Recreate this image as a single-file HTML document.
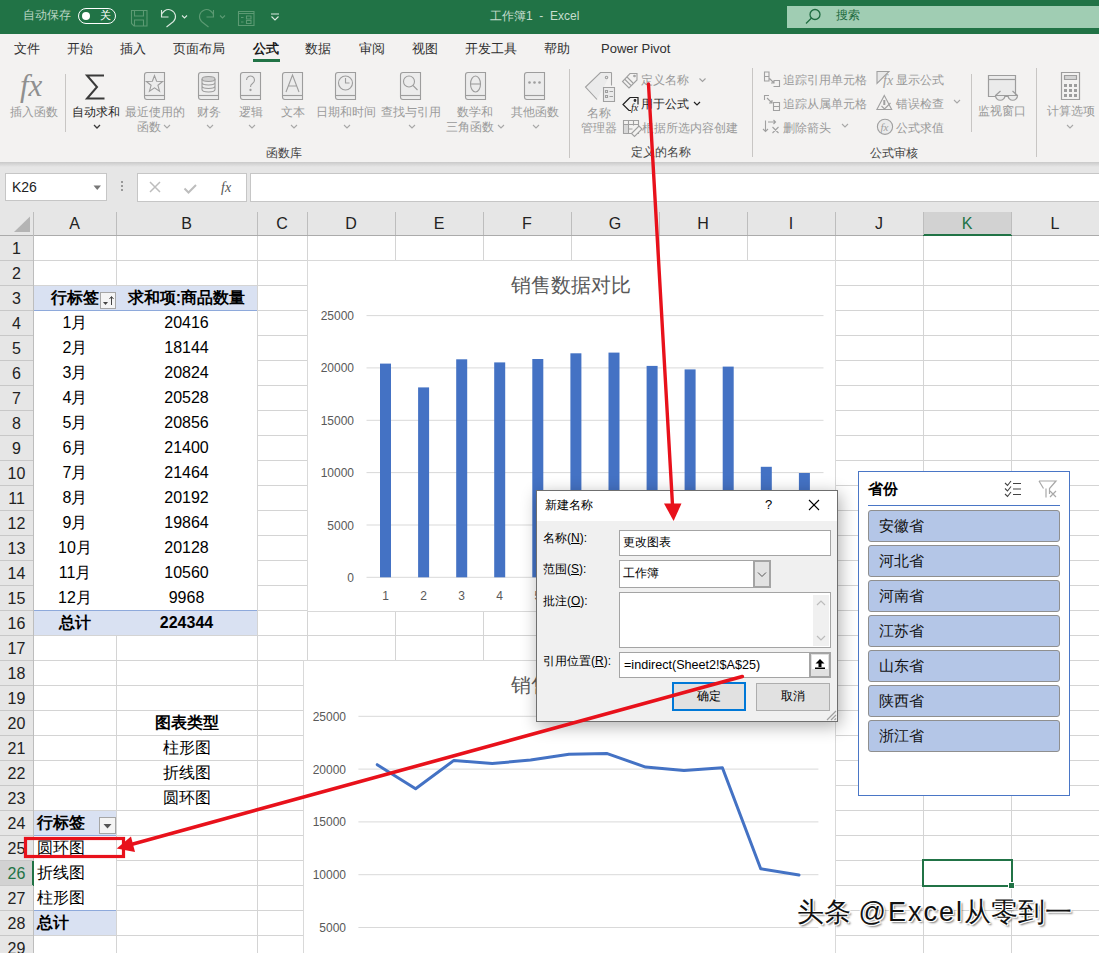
<!DOCTYPE html>
<html><head><meta charset="utf-8">
<style>
*{box-sizing:border-box}
body{margin:0;width:1099px;height:953px;overflow:hidden;position:relative;font-family:"Liberation Sans",sans-serif;background:#fff;color:#000}
.a{position:absolute}
.t{position:absolute;white-space:nowrap;line-height:1}
#title{left:0;top:0;width:1099px;height:34px;background:#217346}
#tabs{left:0;top:34px;width:1099px;height:31px;background:#f3f2f1}
#ribbon{left:0;top:65px;width:1099px;height:97px;background:#f3f2f1}
#fbar{left:0;top:162px;width:1099px;height:74px;background:#e6e6e6}
.tab{font-size:13px;color:#303030;top:42px}
.rl{font-size:12px;color:#9a9a9a}
.rd{font-size:12px;color:#262626}
.sep{position:absolute;width:1px;background:#c8c6c4}
.cell{position:absolute;font-size:16px;line-height:25px;height:25px;text-align:center;white-space:nowrap}
.c{font-size:15.8px}
.rh{position:absolute;left:0;width:33px;height:25px;font-size:16px;line-height:25px;text-align:center;color:#222}
.ch{position:absolute;top:212px;height:23px;font-size:16px;line-height:23px;text-align:center;color:#222}
</style></head><body>
<!-- TITLE BAR -->
<div id="title" class="a"></div>
<div class="t" style="left:23px;top:9px;font-size:12px;color:#b9d5c3">自动保存</div>
<div class="a" style="left:78px;top:8px;width:38px;height:16px;border:1.5px solid #fff;border-radius:8px"></div>
<div class="a" style="left:82px;top:12px;width:8px;height:8px;border-radius:50%;background:#fff"></div>
<div class="t" style="left:100px;top:10px;font-size:11px;color:#fff">关</div>
<svg class="a" style="left:0;top:0" width="300" height="34">
 <g fill="none" stroke="#5c9a73" stroke-width="1.1">
  <path d="M131.5 10.5h15.5v15.5h-13l-2.5-2.5z M134.5 10.5v5.5h9v-5.5 M134.5 26v-6h9v6"/>
  <path d="M161.5 16.5A7 7 0 1 1 173.5 21.5L166.5 27 M161.5 10v7h7" transform="translate(375,0) scale(-1,1)"/>
  <path d="M238.5 11.5h15.5v14h-15.5z M238.5 13.5h15.5 M241 17.5h2.5 M246.5 16h4.5v3h-4.5z M241 22h2.5 M246.5 20.5h4.5v3h-4.5z"/>
  <path d="M220 15.5l2.5 2.5 2.5-2.5"/>
 </g>
 <g fill="none" stroke="#dbe9e0" stroke-width="1.1">
  <path d="M161.5 16.5A7 7 0 1 1 173.5 21.5L166.5 27 M161.5 10v7h7"/>
  <path d="M182 15.5l2.5 2.5 2.5-2.5"/>
  <path d="M271 14h8 M271.5 16.5l3.5 3.5 3.5-3.5"/>
 </g>
</svg>
<div class="t" style="left:490px;top:10px;font-size:12px;color:#c5ddce">工作簿1&nbsp; - &nbsp;Excel</div>
<div class="a" style="left:787px;top:6px;width:312px;height:22px;background:#a0cdb3"></div>
<svg class="a" style="left:800px;top:6px" width="30" height="22"><g fill="none" stroke="#1e6b40" stroke-width="1.3"><circle cx="15" cy="8.5" r="5"/><path d="M11.5 12L6 17.5"/></g></svg>
<div class="t" style="left:836px;top:9px;font-size:12px;color:#1e6b40">搜索</div>

<!-- TABS -->
<div id="tabs" class="a"></div>
<div class="t tab" style="left:14px">文件</div>
<div class="t tab" style="left:67px">开始</div>
<div class="t tab" style="left:120px">插入</div>
<div class="t tab" style="left:173px">页面布局</div>
<div class="t tab" style="left:253px;color:#1a1a1a;font-weight:bold">公式</div>
<div class="a" style="left:253px;top:59px;width:27px;height:3px;background:#217346"></div>
<div class="t tab" style="left:305px">数据</div>
<div class="t tab" style="left:359px">审阅</div>
<div class="t tab" style="left:412px">视图</div>
<div class="t tab" style="left:465px">开发工具</div>
<div class="t tab" style="left:544px">帮助</div>
<div class="t tab" style="left:601px">Power Pivot</div>

<!-- RIBBON -->
<div id="ribbon" class="a"></div>
<!-- group 1 -->
<svg class="a" style="left:0;top:65px" width="1099" height="97">
 <text x="20" y="31" font-family="Liberation Serif" font-style="italic" font-size="31" fill="#8f8f8f">fx</text>
 <path d="M104 10.5H87l10 11.5-10 11.5h17.5" fill="none" stroke="#3a3a3a" stroke-width="2"/>
 <g fill="#f0efee" stroke="#9d9d9d" stroke-width="1.1"><path d="M147.0 7.5h17.5v27h-17.5a2.5 2.5 0 0 1 -2.5 -2.5v-22a2.5 2.5 0 0 1 2.5 -2.5z" fill="#ececec"/><path d="M144.5 30.5h20"/><path d="M146.5 31v3" stroke="#f3f2f1" stroke-width="0"/><path d="M201.0 7.5h17.5v27h-17.5a2.5 2.5 0 0 1 -2.5 -2.5v-22a2.5 2.5 0 0 1 2.5 -2.5z" fill="#ececec"/><path d="M198.5 30.5h20"/><path d="M200.5 31v3" stroke="#f3f2f1" stroke-width="0"/><path d="M243.0 7.5h17.5v27h-17.5a2.5 2.5 0 0 1 -2.5 -2.5v-22a2.5 2.5 0 0 1 2.5 -2.5z" fill="#ececec"/><path d="M240.5 30.5h20"/><path d="M242.5 31v3" stroke="#f3f2f1" stroke-width="0"/><path d="M285.0 7.5h17.5v27h-17.5a2.5 2.5 0 0 1 -2.5 -2.5v-22a2.5 2.5 0 0 1 2.5 -2.5z" fill="#ececec"/><path d="M282.5 30.5h20"/><path d="M284.5 31v3" stroke="#f3f2f1" stroke-width="0"/><path d="M338.0 7.5h17.5v27h-17.5a2.5 2.5 0 0 1 -2.5 -2.5v-22a2.5 2.5 0 0 1 2.5 -2.5z" fill="#ececec"/><path d="M335.5 30.5h20"/><path d="M337.5 31v3" stroke="#f3f2f1" stroke-width="0"/><path d="M403.0 7.5h17.5v27h-17.5a2.5 2.5 0 0 1 -2.5 -2.5v-22a2.5 2.5 0 0 1 2.5 -2.5z" fill="#ececec"/><path d="M400.5 30.5h20"/><path d="M402.5 31v3" stroke="#f3f2f1" stroke-width="0"/><path d="M468.0 7.5h17.5v27h-17.5a2.5 2.5 0 0 1 -2.5 -2.5v-22a2.5 2.5 0 0 1 2.5 -2.5z" fill="#ececec"/><path d="M465.5 30.5h20"/><path d="M467.5 31v3" stroke="#f3f2f1" stroke-width="0"/><path d="M527.0 7.5h17.5v27h-17.5a2.5 2.5 0 0 1 -2.5 -2.5v-22a2.5 2.5 0 0 1 2.5 -2.5z" fill="#ececec"/><path d="M524.5 30.5h20"/><path d="M526.5 31v3" stroke="#f3f2f1" stroke-width="0"/></g>
 <g fill="none" stroke="#9d9d9d" stroke-width="1.1">
  <path d="M154.50 10.60 L156.62 16.29 L162.68 16.54 L157.92 20.31 L159.55 26.16 L154.50 22.80 L149.45 26.16 L151.08 20.31 L146.32 16.54 L152.38 16.29z"/>
  <ellipse cx="208.5" cy="14" rx="6.5" ry="2.5" fill="#d0d0d0"/><path d="M202 14v10.5c0 1.4 2.9 2.5 6.5 2.5s6.5-1.1 6.5-2.5v-10.5 M202 17.5c0 1.4 2.9 2.5 6.5 2.5s6.5-1.1 6.5-2.5 M202 21c0 1.4 2.9 2.5 6.5 2.5s6.5-1.1 6.5-2.5"/>
  <path d="M246.5 15a4 4 0 1 1 6 3.5c-1.5 1-2 1.8-2 3.5" /><circle cx="250.5" cy="25" r="0.6" fill="#9d9d9d"/>
  <path d="M286 27l6.5-17 6.5 17 M288.5 21h8"/>
  <circle cx="345.5" cy="18" r="7"/><path d="M345.5 13v5h4"/>
  <circle cx="409" cy="16.5" r="5.5"/><path d="M413 20.5l4.5 4.5"/>
  <ellipse cx="475.5" cy="19" rx="5" ry="8"/><path d="M470.5 19h10"/>
 </g>
 <g fill="#9d9d9d"><circle cx="529.5" cy="17.5" r="1.3"/><circle cx="534.5" cy="17.5" r="1.3"/><circle cx="539.5" cy="17.5" r="1.3"/></g>
 <g fill="none" stroke="#3a3a3a" stroke-width="1.3"><path d="M94 60l3 3 3-3"/></g>
 <g fill="none" stroke="#a8a8a8" stroke-width="1.1">
  <path d="M164 60l3 3 3-3 M207 60l3 3 3-3 M249 60l3 3 3-3 M291 60l3 3 3-3 M344 60l3 3 3-3 M409 60l3 3 3-3 M498 60l3 3 3-3 M533 60l3 3 3-3"/>
 </g>
</svg>
<div class="sep" style="left:65px;top:74px;height:58px"></div>
<div class="t rl" style="left:10px;top:106px">插入函数</div>
<div class="t rd" style="left:72px;top:106px">自动求和</div>
<div class="t rl" style="left:125px;top:106px">最近使用的</div>
<div class="t rl" style="left:137px;top:121px">函数</div>
<div class="t rl" style="left:197px;top:106px">财务</div>
<div class="t rl" style="left:239px;top:106px">逻辑</div>
<div class="t rl" style="left:281px;top:106px">文本</div>
<div class="t rl" style="left:316px;top:106px">日期和时间</div>
<div class="t rl" style="left:381px;top:106px">查找与引用</div>
<div class="t rl" style="left:457px;top:106px">数学和</div>
<div class="t rl" style="left:446px;top:121px">三角函数</div>
<div class="t rl" style="left:511px;top:106px">其他函数</div>
<div class="t rd" style="left:266px;top:147px;color:#444">函数库</div>
<div class="sep" style="left:569px;top:69px;height:89px"></div>
<!-- group 2 -->
<svg class="a" style="left:560px;top:65px" width="540" height="97">
 <g fill="none" stroke="#a0a0a0" stroke-width="1.1">
  <path d="M51.5 7.5h-11L25.5 22l11.5 12.5" fill="#ebebeb"/><path d="M51.5 7.5v13"/><circle cx="46.5" cy="12.5" r="1.2"/>
  <path d="M43.5 22.5h11v14h-11z" fill="#ebebeb"/><path d="M45.5 25.5h2v2h-2z M49.5 26.5h3.5 M45.5 30.5h2v2h-2z M49.5 31.5h3.5"/>
  <path d="M70 8.5h7v6.5l-8 8-6.5-6.5z M67 12l6 6 M65 14.5l6 6"/><circle cx="74.5" cy="11" r="0.8"/>
  <path d="M699.5 13.5l3 3 3-3" transform="translate(-560,0)"/>
  <path d="M63.5 55.5h15v13h-15z M63.5 59.5h15 M63.5 64h9 M68.5 55.5v13 M73.5 55.5v5" /><path d="M64 60h4v8h-4z" fill="#d8d8d8" stroke="none"/><path d="M71.5 68.5l7.5-7.5 3 3-7.5 7.5-3-3z" fill="#f3f2f1"/>
 </g>
 <g fill="none" stroke="#222" stroke-width="1.2">
  <path d="M70 32.5h8v7 M70 32.5l-7 7 6 6h2"/><circle cx="75" cy="35.5" r="0.8"/>
  <path d="M134 37l3 3 3-3"/>
 </g>
 <text x="71" y="46" font-family="Liberation Serif" font-style="italic" font-size="10" fill="#222">fx</text>
</svg>
<div class="t rl" style="left:587px;top:107px">名称</div>
<div class="t rl" style="left:581px;top:122px">管理器</div>
<div class="t rl" style="left:641px;top:74px">定义名称</div>
<div class="t rd" style="left:641px;top:98px">用于公式</div>
<div class="t rl" style="left:642px;top:122px">根据所选内容创建</div>
<div class="t rd" style="left:631px;top:146px;color:#444">定义的名称</div>
<div class="sep" style="left:752px;top:68px;height:89px"></div>
<!-- group 3 -->
<svg class="a" style="left:750px;top:65px" width="349" height="97">
 <g fill="none" stroke="#a0a0a0" stroke-width="1.1">
  <path d="M14.5 7h4.5v9h-4.5z M14.5 11.5h4.5 M19.5 13.5l4.5 4.5 M24 15v3h-3 M23.5 15.5h6v6h-6"/>
  <path d="M14.5 35v-4.5h4.5 M17 33l5 5 M22 35v3h-3 M23.5 37.5h6v8h-6z M23.5 41.5h6"/>
  <path d="M15.5 55.5v11 M13 64l2.5 2.5 2.5-2.5 M18 57h7.5 M23.5 55l2 2-2 2 M22.5 62l6 6 M28.5 62l-6 6"/>
  <path d="M127 6.5h12L127 18.5z" fill="#e8e8e8"/>
  <path d="M134.3 30.5l7.4 14h-14.8z"/><path d="M134.3 35v5" stroke-width="2"/><path d="M131.5 41l3 3 6-6"/>
  <circle cx="135" cy="61.8" r="7.6" fill="#ececec"/>
 </g>
 <text x="133" y="20" font-family="Liberation Serif" font-style="italic" font-size="14" fill="#a0a0a0">fx</text>
 <text x="130.5" y="66" font-family="Liberation Serif" font-style="italic" font-size="11" fill="#a0a0a0">fx</text>
 <g fill="none" stroke="#a8a8a8" stroke-width="1.1"><path d="M92 59l3 3 3-3 M204 35l3 3 3-3"/></g>
 <g fill="none" stroke="#9d9d9d" stroke-width="1.2">
  <path d="M238.5 10.5h27v21h-27z" fill="#ebebeb"/><path d="M238.5 14.5h27"/>
  <path d="M245.5 30.5h9.5a4.75 4.75 0 0 1 -9.5 0z M258 30.5h9.5a4.75 4.75 0 0 1 -9.5 0z" fill="#ebebeb"/><path d="M255 30.5h3 M245.5 30.5l5-4.5 M267.5 30.5l-5-4.5"/>
  <path d="M311.5 7.5h18v27h-18z"/><path d="M314.5 10.5h12v4h-12z" fill="#d4d4d4"/>
 </g>
 <g fill="#9d9d9d">
  <rect x="314" y="19" width="3" height="3"/><rect x="319" y="19" width="3" height="3"/><rect x="324" y="19" width="3" height="3"/>
  <rect x="314" y="24" width="3" height="3"/><rect x="319" y="24" width="3" height="3"/><rect x="324" y="24" width="3" height="3"/>
  <rect x="314" y="29" width="3" height="3"/><rect x="319" y="29" width="3" height="3"/><rect x="324" y="29" width="3" height="3"/>
 </g>
 <g fill="none" stroke="#a8a8a8" stroke-width="1.1"><path d="M317 60l3 3 3-3"/></g>
</svg>
<div class="t rl" style="left:783px;top:74px">追踪引用单元格</div>
<div class="t rl" style="left:783px;top:98px">追踪从属单元格</div>
<div class="t rl" style="left:783px;top:122px">删除箭头</div>
<div class="t rl" style="left:896px;top:74px">显示公式</div>
<div class="t rl" style="left:896px;top:98px">错误检查</div>
<div class="t rl" style="left:896px;top:122px">公式求值</div>
<div class="t rd" style="left:870px;top:147px;color:#444">公式审核</div>
<div class="sep" style="left:971px;top:74px;height:58px"></div>
<div class="t rl" style="left:978px;top:105px">监视窗口</div>
<div class="sep" style="left:1036px;top:68px;height:89px"></div>
<div class="t rl" style="left:1047px;top:105px">计算选项</div>


<!-- FORMULA BAR -->
<div id="fbar" class="a"></div>
<div class="a" style="left:0;top:162px;width:1099px;height:5px;background:linear-gradient(#c9c9c9,#e6e6e6)"></div>
<div class="a" style="left:5px;top:173px;width:102px;height:28px;background:#fff;border:1px solid #c6c6c6"></div>
<div class="t" style="left:12px;top:180px;font-size:14px;color:#222">K26</div>
<svg class="a" style="left:93px;top:185px" width="9" height="6"><path d="M0.5 0.5h7.5l-3.75 4.5z" fill="#777"/></svg>
<div class="a" style="left:121px;top:181px;width:2px;height:2px;background:#999;box-shadow:0 4px #999,0 8px #999"></div>
<div class="a" style="left:137px;top:173px;width:110px;height:29px;background:#fff;border:1px solid #c6c6c6"></div>
<svg class="a" style="left:137px;top:173px" width="110" height="29"><g fill="none" stroke="#bdbdbd" stroke-width="1.5"><path d="M13 9l10 10M23 9l-10 10"/><path d="M47.5 15.5l4 4 7.5-7.5" stroke-width="2"/></g>
<text x="84" y="19" font-family="Liberation Serif" font-style="italic" font-size="14" fill="#555">fx</text></svg>
<div class="a" style="left:250px;top:173px;width:849px;height:29px;background:#fff;border:1px solid #c6c6c6;border-right:none"></div>

<!-- SHEET -->
<div class="a" style="left:0;top:236px;width:33px;height:717px;background:#e6e6e6"></div><svg class="a" style="left:0;top:0" width="1099" height="953"><rect x="116" y="235" width="1" height="718" fill="#d4d4d4"/><rect x="257" y="235" width="1" height="718" fill="#d4d4d4"/><rect x="307" y="235" width="1" height="718" fill="#d4d4d4"/><rect x="395" y="235" width="1" height="718" fill="#d4d4d4"/><rect x="483" y="235" width="1" height="718" fill="#d4d4d4"/><rect x="571" y="235" width="1" height="718" fill="#d4d4d4"/><rect x="659" y="235" width="1" height="718" fill="#d4d4d4"/><rect x="747" y="235" width="1" height="718" fill="#d4d4d4"/><rect x="835" y="235" width="1" height="718" fill="#d4d4d4"/><rect x="923" y="235" width="1" height="718" fill="#d4d4d4"/><rect x="1011" y="235" width="1" height="718" fill="#d4d4d4"/><rect x="33" y="260" width="1066" height="1" fill="#d4d4d4"/><rect x="33" y="285" width="1066" height="1" fill="#d4d4d4"/><rect x="33" y="310" width="1066" height="1" fill="#d4d4d4"/><rect x="33" y="335" width="1066" height="1" fill="#d4d4d4"/><rect x="33" y="360" width="1066" height="1" fill="#d4d4d4"/><rect x="33" y="385" width="1066" height="1" fill="#d4d4d4"/><rect x="33" y="410" width="1066" height="1" fill="#d4d4d4"/><rect x="33" y="435" width="1066" height="1" fill="#d4d4d4"/><rect x="33" y="460" width="1066" height="1" fill="#d4d4d4"/><rect x="33" y="485" width="1066" height="1" fill="#d4d4d4"/><rect x="33" y="510" width="1066" height="1" fill="#d4d4d4"/><rect x="33" y="535" width="1066" height="1" fill="#d4d4d4"/><rect x="33" y="560" width="1066" height="1" fill="#d4d4d4"/><rect x="33" y="585" width="1066" height="1" fill="#d4d4d4"/><rect x="33" y="610" width="1066" height="1" fill="#d4d4d4"/><rect x="33" y="635" width="1066" height="1" fill="#d4d4d4"/><rect x="33" y="660" width="1066" height="1" fill="#d4d4d4"/><rect x="33" y="685" width="1066" height="1" fill="#d4d4d4"/><rect x="33" y="710" width="1066" height="1" fill="#d4d4d4"/><rect x="33" y="735" width="1066" height="1" fill="#d4d4d4"/><rect x="33" y="760" width="1066" height="1" fill="#d4d4d4"/><rect x="33" y="785" width="1066" height="1" fill="#d4d4d4"/><rect x="33" y="810" width="1066" height="1" fill="#d4d4d4"/><rect x="33" y="835" width="1066" height="1" fill="#d4d4d4"/><rect x="33" y="860" width="1066" height="1" fill="#d4d4d4"/><rect x="33" y="885" width="1066" height="1" fill="#d4d4d4"/><rect x="33" y="910" width="1066" height="1" fill="#d4d4d4"/><rect x="33" y="935" width="1066" height="1" fill="#d4d4d4"/></svg>
<div class="a" style="left:0;top:235px;width:1099px;height:1px;background:#ababab"></div>
<div class="a" style="left:923px;top:212px;width:88px;height:23px;background:#d2d2d2"></div>
<div class="a" style="left:923px;top:234px;width:89px;height:2px;background:#217346"></div>
<div class="a" style="left:116px;top:212px;width:1px;height:23px;background:#bdbdbd"></div>
<div class="ch" style="left:33px;width:83px;color:#222">A</div>
<div class="a" style="left:257px;top:212px;width:1px;height:23px;background:#bdbdbd"></div>
<div class="ch" style="left:116px;width:141px;color:#222">B</div>
<div class="a" style="left:307px;top:212px;width:1px;height:23px;background:#bdbdbd"></div>
<div class="ch" style="left:257px;width:50px;color:#222">C</div>
<div class="a" style="left:395px;top:212px;width:1px;height:23px;background:#bdbdbd"></div>
<div class="ch" style="left:307px;width:88px;color:#222">D</div>
<div class="a" style="left:483px;top:212px;width:1px;height:23px;background:#bdbdbd"></div>
<div class="ch" style="left:395px;width:88px;color:#222">E</div>
<div class="a" style="left:571px;top:212px;width:1px;height:23px;background:#bdbdbd"></div>
<div class="ch" style="left:483px;width:88px;color:#222">F</div>
<div class="a" style="left:659px;top:212px;width:1px;height:23px;background:#bdbdbd"></div>
<div class="ch" style="left:571px;width:88px;color:#222">G</div>
<div class="a" style="left:747px;top:212px;width:1px;height:23px;background:#bdbdbd"></div>
<div class="ch" style="left:659px;width:88px;color:#222">H</div>
<div class="a" style="left:835px;top:212px;width:1px;height:23px;background:#bdbdbd"></div>
<div class="ch" style="left:747px;width:88px;color:#222">I</div>
<div class="a" style="left:923px;top:212px;width:1px;height:23px;background:#bdbdbd"></div>
<div class="ch" style="left:835px;width:88px;color:#222">J</div>
<div class="a" style="left:1011px;top:212px;width:1px;height:23px;background:#bdbdbd"></div>
<div class="ch" style="left:923px;width:88px;color:#217346">K</div>
<div class="a" style="left:1099px;top:212px;width:1px;height:23px;background:#bdbdbd"></div>
<div class="ch" style="left:1011px;width:88px;color:#222">L</div>
<div class="a" style="left:33px;top:212px;width:1px;height:741px;background:#bdbdbd"></div>
<svg class="a" style="left:0;top:212px" width="33" height="23"><path d="M30 4.5V20H14z" fill="#b4b4b4"/></svg>
<div class="a" style="left:0;top:260px;width:33px;height:1px;background:#c8c8c8"></div>
<div class="rh" style="top:236px;color:#222">1</div>
<div class="a" style="left:0;top:285px;width:33px;height:1px;background:#c8c8c8"></div>
<div class="rh" style="top:261px;color:#222">2</div>
<div class="a" style="left:0;top:310px;width:33px;height:1px;background:#c8c8c8"></div>
<div class="rh" style="top:286px;color:#222">3</div>
<div class="a" style="left:0;top:335px;width:33px;height:1px;background:#c8c8c8"></div>
<div class="rh" style="top:311px;color:#222">4</div>
<div class="a" style="left:0;top:360px;width:33px;height:1px;background:#c8c8c8"></div>
<div class="rh" style="top:336px;color:#222">5</div>
<div class="a" style="left:0;top:385px;width:33px;height:1px;background:#c8c8c8"></div>
<div class="rh" style="top:361px;color:#222">6</div>
<div class="a" style="left:0;top:410px;width:33px;height:1px;background:#c8c8c8"></div>
<div class="rh" style="top:386px;color:#222">7</div>
<div class="a" style="left:0;top:435px;width:33px;height:1px;background:#c8c8c8"></div>
<div class="rh" style="top:411px;color:#222">8</div>
<div class="a" style="left:0;top:460px;width:33px;height:1px;background:#c8c8c8"></div>
<div class="rh" style="top:436px;color:#222">9</div>
<div class="a" style="left:0;top:485px;width:33px;height:1px;background:#c8c8c8"></div>
<div class="rh" style="top:461px;color:#222">10</div>
<div class="a" style="left:0;top:510px;width:33px;height:1px;background:#c8c8c8"></div>
<div class="rh" style="top:486px;color:#222">11</div>
<div class="a" style="left:0;top:535px;width:33px;height:1px;background:#c8c8c8"></div>
<div class="rh" style="top:511px;color:#222">12</div>
<div class="a" style="left:0;top:560px;width:33px;height:1px;background:#c8c8c8"></div>
<div class="rh" style="top:536px;color:#222">13</div>
<div class="a" style="left:0;top:585px;width:33px;height:1px;background:#c8c8c8"></div>
<div class="rh" style="top:561px;color:#222">14</div>
<div class="a" style="left:0;top:610px;width:33px;height:1px;background:#c8c8c8"></div>
<div class="rh" style="top:586px;color:#222">15</div>
<div class="a" style="left:0;top:635px;width:33px;height:1px;background:#c8c8c8"></div>
<div class="rh" style="top:611px;color:#222">16</div>
<div class="a" style="left:0;top:660px;width:33px;height:1px;background:#c8c8c8"></div>
<div class="rh" style="top:636px;color:#222">17</div>
<div class="a" style="left:0;top:685px;width:33px;height:1px;background:#c8c8c8"></div>
<div class="rh" style="top:661px;color:#222">18</div>
<div class="a" style="left:0;top:710px;width:33px;height:1px;background:#c8c8c8"></div>
<div class="rh" style="top:686px;color:#222">19</div>
<div class="a" style="left:0;top:735px;width:33px;height:1px;background:#c8c8c8"></div>
<div class="rh" style="top:711px;color:#222">20</div>
<div class="a" style="left:0;top:760px;width:33px;height:1px;background:#c8c8c8"></div>
<div class="rh" style="top:736px;color:#222">21</div>
<div class="a" style="left:0;top:785px;width:33px;height:1px;background:#c8c8c8"></div>
<div class="rh" style="top:761px;color:#222">22</div>
<div class="a" style="left:0;top:810px;width:33px;height:1px;background:#c8c8c8"></div>
<div class="rh" style="top:786px;color:#222">23</div>
<div class="a" style="left:0;top:835px;width:33px;height:1px;background:#c8c8c8"></div>
<div class="rh" style="top:811px;color:#222">24</div>
<div class="a" style="left:0;top:860px;width:33px;height:1px;background:#c8c8c8"></div>
<div class="rh" style="top:836px;color:#222">25</div>
<div class="a" style="left:0;top:861px;width:33px;height:24px;background:#d2d2d2"></div>
<div class="a" style="left:32px;top:861px;width:2px;height:25px;background:#217346"></div>
<div class="a" style="left:0;top:885px;width:33px;height:1px;background:#c8c8c8"></div>
<div class="rh" style="top:861px;color:#217346">26</div>
<div class="a" style="left:0;top:910px;width:33px;height:1px;background:#c8c8c8"></div>
<div class="rh" style="top:886px;color:#222">27</div>
<div class="a" style="left:0;top:935px;width:33px;height:1px;background:#c8c8c8"></div>
<div class="rh" style="top:911px;color:#222">28</div>
<div class="a" style="left:0;top:960px;width:33px;height:1px;background:#c8c8c8"></div>
<div class="rh" style="top:936px;color:#222">29</div>
<!-- PIVOT 1 -->
<div class="a" style="left:34px;top:286px;width:223px;height:349px;background:#fff"></div>
<div class="a" style="left:34px;top:286px;width:223px;height:24px;background:#d9e1f2"></div>
<div class="a" style="left:34px;top:310px;width:223px;height:1px;background:#8ea9db"></div>
<div class="a" style="left:34px;top:610px;width:223px;height:1px;background:#8ea9db"></div>
<div class="a" style="left:34px;top:611px;width:223px;height:24px;background:#d9e1f2"></div>
<div class="cell" style="left:51px;top:285px;font-weight:bold"><span class="c">行标签</span></div>
<div class="a" style="left:100px;top:292px;width:16px;height:17px;border:1px solid #a6a6a6;background:#f4f4f4"></div>
<svg class="a" style="left:100px;top:292px" width="16" height="17"><path d="M3 10h5l-2.5 3z" fill="#444"/><path d="M11.5 13V5 M9.5 7l2-2.5 2 2.5" fill="none" stroke="#444" stroke-width="1"/></svg>
<div class="cell" style="left:116px;top:285px;width:141px;font-weight:bold"><span class="c">求和项:商品数量</span></div>
<div class="cell" style="left:34px;top:310px;width:82px">1<span class="c">月</span></div><div class="cell" style="left:116px;top:310px;width:141px">20416</div>
<div class="cell" style="left:34px;top:335px;width:82px">2<span class="c">月</span></div><div class="cell" style="left:116px;top:335px;width:141px">18144</div>
<div class="cell" style="left:34px;top:360px;width:82px">3<span class="c">月</span></div><div class="cell" style="left:116px;top:360px;width:141px">20824</div>
<div class="cell" style="left:34px;top:385px;width:82px">4<span class="c">月</span></div><div class="cell" style="left:116px;top:385px;width:141px">20528</div>
<div class="cell" style="left:34px;top:410px;width:82px">5<span class="c">月</span></div><div class="cell" style="left:116px;top:410px;width:141px">20856</div>
<div class="cell" style="left:34px;top:435px;width:82px">6<span class="c">月</span></div><div class="cell" style="left:116px;top:435px;width:141px">21400</div>
<div class="cell" style="left:34px;top:460px;width:82px">7<span class="c">月</span></div><div class="cell" style="left:116px;top:460px;width:141px">21464</div>
<div class="cell" style="left:34px;top:485px;width:82px">8<span class="c">月</span></div><div class="cell" style="left:116px;top:485px;width:141px">20192</div>
<div class="cell" style="left:34px;top:510px;width:82px">9<span class="c">月</span></div><div class="cell" style="left:116px;top:510px;width:141px">19864</div>
<div class="cell" style="left:34px;top:535px;width:82px">10<span class="c">月</span></div><div class="cell" style="left:116px;top:535px;width:141px">20128</div>
<div class="cell" style="left:34px;top:560px;width:82px">11<span class="c">月</span></div><div class="cell" style="left:116px;top:560px;width:141px">10560</div>
<div class="cell" style="left:34px;top:585px;width:82px">12<span class="c">月</span></div><div class="cell" style="left:116px;top:585px;width:141px">9968</div>
<div class="cell" style="left:34px;top:610px;width:82px;font-weight:bold"><span class="c">总计</span></div><div class="cell" style="left:116px;top:610px;width:141px;font-weight:bold">224344</div>
<!-- chart type list -->
<div class="cell" style="left:116px;top:710px;width:141px;font-weight:bold"><span class="c">图表类型</span></div>
<div class="cell" style="left:116px;top:735px;width:141px"><span class="c">柱形图</span></div>
<div class="cell" style="left:116px;top:760px;width:141px"><span class="c">折线图</span></div>
<div class="cell" style="left:116px;top:785px;width:141px"><span class="c">圆环图</span></div>
<!-- PIVOT 2 -->
<div class="a" style="left:34px;top:811px;width:82px;height:124px;background:#fff"></div>
<div class="a" style="left:34px;top:811px;width:82px;height:24px;background:#d9e1f2"></div>
<div class="a" style="left:34px;top:835px;width:82px;height:1px;background:#8ea9db"></div>
<div class="a" style="left:34px;top:910px;width:82px;height:1px;background:#8ea9db"></div>
<div class="a" style="left:34px;top:911px;width:82px;height:24px;background:#d9e1f2"></div>
<div class="cell" style="left:37px;top:810px;font-weight:bold"><span class="c">行标签</span></div>
<div class="a" style="left:99px;top:817px;width:17px;height:17px;border:1px solid #a6a6a6;background:#f4f4f4"></div>
<svg class="a" style="left:99px;top:817px" width="17" height="17"><path d="M4.5 7h8l-4 4.5z" fill="#555"/></svg>
<div class="cell" style="left:37px;top:835px"><span class="c">圆环图</span></div>
<div class="cell" style="left:37px;top:860px"><span class="c">折线图</span></div>
<div class="cell" style="left:37px;top:885px"><span class="c">柱形图</span></div>
<div class="cell" style="left:37px;top:910px;font-weight:bold"><span class="c">总计</span></div>
<div class="a" style="left:307px;top:260px;width:529px;height:352px;background:#fff;border:1px solid #d9d9d9"></div>
<svg class="a" style="left:0;top:0" width="1099" height="953"><text x="571" y="292" text-anchor="middle" font-family="Liberation Sans" font-size="20" fill="#595959">销售数据对比</text><rect x="366.5" y="576.8" width="457" height="1" fill="#d9d9d9"/><text x="354" y="581.8" text-anchor="end" font-family="Liberation Sans" font-size="12" fill="#595959">0</text><rect x="366.5" y="524.5" width="457" height="1" fill="#d9d9d9"/><text x="354" y="529.5" text-anchor="end" font-family="Liberation Sans" font-size="12" fill="#595959">5000</text><rect x="366.5" y="472.1" width="457" height="1" fill="#d9d9d9"/><text x="354" y="477.1" text-anchor="end" font-family="Liberation Sans" font-size="12" fill="#595959">10000</text><rect x="366.5" y="419.8" width="457" height="1" fill="#d9d9d9"/><text x="354" y="424.8" text-anchor="end" font-family="Liberation Sans" font-size="12" fill="#595959">15000</text><rect x="366.5" y="367.4" width="457" height="1" fill="#d9d9d9"/><text x="354" y="372.4" text-anchor="end" font-family="Liberation Sans" font-size="12" fill="#595959">20000</text><rect x="366.5" y="315.1" width="457" height="1" fill="#d9d9d9"/><text x="354" y="320.1" text-anchor="end" font-family="Liberation Sans" font-size="12" fill="#595959">25000</text><rect x="380.0" y="363.6" width="11" height="213.7" fill="#4472c4"/><text x="385.5" y="600" text-anchor="middle" font-family="Liberation Sans" font-size="12" fill="#595959">1</text><rect x="418.1" y="387.4" width="11" height="189.9" fill="#4472c4"/><text x="423.6" y="600" text-anchor="middle" font-family="Liberation Sans" font-size="12" fill="#595959">2</text><rect x="456.2" y="359.3" width="11" height="218.0" fill="#4472c4"/><text x="461.7" y="600" text-anchor="middle" font-family="Liberation Sans" font-size="12" fill="#595959">3</text><rect x="494.2" y="362.4" width="11" height="214.9" fill="#4472c4"/><text x="499.7" y="600" text-anchor="middle" font-family="Liberation Sans" font-size="12" fill="#595959">4</text><rect x="532.3" y="359.0" width="11" height="218.3" fill="#4472c4"/><text x="537.8" y="600" text-anchor="middle" font-family="Liberation Sans" font-size="12" fill="#595959">5</text><rect x="570.4" y="353.3" width="11" height="224.0" fill="#4472c4"/><text x="575.9" y="600" text-anchor="middle" font-family="Liberation Sans" font-size="12" fill="#595959">6</text><rect x="608.5" y="352.6" width="11" height="224.7" fill="#4472c4"/><text x="614.0" y="600" text-anchor="middle" font-family="Liberation Sans" font-size="12" fill="#595959">7</text><rect x="646.6" y="365.9" width="11" height="211.4" fill="#4472c4"/><text x="652.1" y="600" text-anchor="middle" font-family="Liberation Sans" font-size="12" fill="#595959">8</text><rect x="684.6" y="369.4" width="11" height="207.9" fill="#4472c4"/><text x="690.1" y="600" text-anchor="middle" font-family="Liberation Sans" font-size="12" fill="#595959">9</text><rect x="722.7" y="366.6" width="11" height="210.7" fill="#4472c4"/><text x="728.2" y="600" text-anchor="middle" font-family="Liberation Sans" font-size="12" fill="#595959">10</text><rect x="760.8" y="466.8" width="11" height="110.5" fill="#4472c4"/><text x="766.3" y="600" text-anchor="middle" font-family="Liberation Sans" font-size="12" fill="#595959">11</text><rect x="798.9" y="473.0" width="11" height="104.3" fill="#4472c4"/><text x="804.4" y="600" text-anchor="middle" font-family="Liberation Sans" font-size="12" fill="#595959">12</text></svg>
<div class="a" style="left:303px;top:660px;width:533px;height:300px;background:#fff;border:1px solid #d9d9d9"></div>
<svg class="a" style="left:0;top:0" width="1099" height="953"><text x="571" y="692" text-anchor="middle" font-family="Liberation Sans" font-size="20" fill="#595959">销售数据对比</text><rect x="358.4" y="715.8" width="460" height="1" fill="#d9d9d9"/><text x="346" y="720.8" text-anchor="end" font-family="Liberation Sans" font-size="12" fill="#595959">25000</text><rect x="358.4" y="768.6" width="460" height="1" fill="#d9d9d9"/><text x="346" y="773.6" text-anchor="end" font-family="Liberation Sans" font-size="12" fill="#595959">20000</text><rect x="358.4" y="821.4" width="460" height="1" fill="#d9d9d9"/><text x="346" y="826.4" text-anchor="end" font-family="Liberation Sans" font-size="12" fill="#595959">15000</text><rect x="358.4" y="874.2" width="460" height="1" fill="#d9d9d9"/><text x="346" y="879.2" text-anchor="end" font-family="Liberation Sans" font-size="12" fill="#595959">10000</text><rect x="358.4" y="927.0" width="460" height="1" fill="#d9d9d9"/><text x="346" y="932.0" text-anchor="end" font-family="Liberation Sans" font-size="12" fill="#595959">5000</text><polyline points="377.2,764.7 415.6,788.7 453.9,760.4 492.2,763.5 530.6,760.1 569.0,754.3 607.3,753.6 645.6,767.1 684.0,770.5 722.4,767.7 760.7,868.8 799.0,875.0" fill="none" stroke="#4472c4" stroke-width="3" stroke-linejoin="round" stroke-linecap="round"/></svg>
<!-- SELECTION K26 -->
<div class="a" style="left:922px;top:859px;width:91px;height:28px;border:2px solid #217346"></div>
<div class="a" style="left:1008px;top:882px;width:7px;height:7px;background:#217346;border:1px solid #fff"></div>
<!-- SLICER -->
<div class="a" style="left:858px;top:471px;width:212px;height:325px;background:#fff;border:1px solid #4a76c6"></div>
<div class="t" style="left:868px;top:481px;font-size:15px;font-weight:bold;color:#000">省份</div>
<svg class="a" style="left:1000px;top:476px" width="65" height="28">
 <g fill="none" stroke="#444" stroke-width="1.1"><path d="M5 7l2.5 2.5 3.5-4.5 M5 12.5l2.5 2.5 3.5-4.5 M5 18l2.5 2.5 3.5-4.5 M13 7.5h8 M13 13h8 M13 18.5h8"/></g>
 <g fill="none" stroke="#a8a8a8" stroke-width="1.2"><path d="M39 5h17l-6.5 7.5v5.5 M56.5 5 M43.5 12.5L39 5"/><path d="M46 12.5v9 M50 15l6 6 M56 15l-6 6"/></g>
</svg>
<div class="a" style="left:868px;top:505px;width:192px;height:1px;background:#4a76c6"></div>
<div class="a" style="left:868px;top:510px;width:192px;height:32px;background:#b4c6e7;border:1px solid #8f8f8f;border-radius:3px"></div>
<div class="t" style="left:879px;top:518px;font-size:15px;color:#111">安徽省</div>
<div class="a" style="left:868px;top:545px;width:192px;height:32px;background:#b4c6e7;border:1px solid #8f8f8f;border-radius:3px"></div>
<div class="t" style="left:879px;top:553px;font-size:15px;color:#111">河北省</div>
<div class="a" style="left:868px;top:580px;width:192px;height:32px;background:#b4c6e7;border:1px solid #8f8f8f;border-radius:3px"></div>
<div class="t" style="left:879px;top:588px;font-size:15px;color:#111">河南省</div>
<div class="a" style="left:868px;top:615px;width:192px;height:32px;background:#b4c6e7;border:1px solid #8f8f8f;border-radius:3px"></div>
<div class="t" style="left:879px;top:623px;font-size:15px;color:#111">江苏省</div>
<div class="a" style="left:868px;top:650px;width:192px;height:32px;background:#b4c6e7;border:1px solid #8f8f8f;border-radius:3px"></div>
<div class="t" style="left:879px;top:658px;font-size:15px;color:#111">山东省</div>
<div class="a" style="left:868px;top:685px;width:192px;height:32px;background:#b4c6e7;border:1px solid #8f8f8f;border-radius:3px"></div>
<div class="t" style="left:879px;top:693px;font-size:15px;color:#111">陕西省</div>
<div class="a" style="left:868px;top:720px;width:192px;height:32px;background:#b4c6e7;border:1px solid #8f8f8f;border-radius:3px"></div>
<div class="t" style="left:879px;top:728px;font-size:15px;color:#111">浙江省</div>
<!-- DIALOG -->
<div class="a" style="left:536px;top:490px;width:302px;height:232px;background:#f0f0f0;border:1px solid #6f6f6f;box-shadow:2px 4px 16px rgba(0,0,0,0.32)"></div>
<div class="a" style="left:537px;top:491px;width:300px;height:30px;background:#fff"></div>
<div class="t" style="left:545px;top:499px;font-size:12px">新建名称</div>
<div class="t" style="left:765px;top:498px;font-size:13px">?</div>
<svg class="a" style="left:808px;top:499px" width="12" height="12"><path d="M1 1l10 10M11 1L1 11" stroke="#000" stroke-width="1.1"/></svg>
<div class="t" style="left:543px;top:532px;font-size:12px">名称(<u>N</u>):</div>
<div class="t" style="left:543px;top:563px;font-size:12px">范围(<u>S</u>):</div>
<div class="t" style="left:543px;top:595px;font-size:12px">批注(<u>O</u>):</div>
<div class="t" style="left:543px;top:655px;font-size:12px">引用位置(<u>R</u>):</div>
<div class="a" style="left:619px;top:530px;width:212px;height:26px;background:#fff;border:1px solid #a4a4a4"></div>
<div class="t" style="left:623px;top:536px;font-size:12px">更改图表</div>
<div class="a" style="left:619px;top:560px;width:152px;height:28px;background:#fff;border:1px solid #a4a4a4"></div>
<div class="a" style="left:753px;top:560px;width:18px;height:28px;background:#e2e2e2;border:2px solid #a4a4a4"></div>
<svg class="a" style="left:753px;top:560px" width="18" height="28"><path d="M5 12.5l4 4 4-4" fill="none" stroke="#555" stroke-width="1"/></svg>
<div class="t" style="left:623px;top:567px;font-size:12px">工作簿</div>
<div class="a" style="left:619px;top:592px;width:212px;height:56px;background:#fff;border:1px solid #a4a4a4"></div>
<div class="a" style="left:813px;top:595px;width:16px;height:51px;background:#f0f0f0"></div>
<svg class="a" style="left:813px;top:595px" width="16" height="51"><path d="M4 10l4-4 4 4 M4 41l4 4 4-4" fill="none" stroke="#bcbcbc" stroke-width="1.2"/></svg>
<div class="a" style="left:619px;top:652px;width:212px;height:26px;background:#fff;border:1px solid #a4a4a4"></div>
<div class="a" style="left:809px;top:652px;width:22px;height:26px;background:#e1e1e1;border:2px solid #a4a4a4"></div>
<div class="a" style="left:812px;top:655px;width:16px;height:14px;background:#fff"></div>
<svg class="a" style="left:809px;top:652px" width="22" height="26"><path d="M11 7l-4.5 4.5h3v3.5h3v-3.5h3z" fill="#000"/><rect x="6" y="15.5" width="10" height="1.5" fill="#000"/></svg>
<div class="t" style="left:624px;top:659px;font-size:12.6px">=indirect(Sheet2!$A$25)</div>
<div class="a" style="left:672px;top:682px;width:74px;height:29px;background:#e1e1e1;border:2px solid #0078d7"></div>
<div class="t" style="left:672px;top:690px;width:74px;text-align:center;font-size:12px">确定</div>
<div class="a" style="left:756px;top:683px;width:74px;height:28px;background:#e1e1e1;border:1px solid #adadad"></div>
<div class="t" style="left:756px;top:690px;width:74px;text-align:center;font-size:12px">取消</div>
<svg class="a" style="left:824px;top:708px" width="13" height="13"><path d="M12 3L3 12 M12 7l-5 5 M12 10.5L10.5 12" stroke="#a0a0a0" stroke-width="1.2"/></svg>
<!-- RED ARROWS -->
<svg class="a" style="left:0;top:0" width="1099" height="953">
 <g stroke="#e8111b" fill="none" stroke-linecap="round">
  <path d="M648.5 84L672.5 505" stroke-width="3.4"/>
  <path d="M742.3 676.5L133 844" stroke-width="3.6"/>
  <rect x="25.5" y="838.5" width="98" height="18" stroke-width="3.2"/>
 </g>
 <g fill="#e8111b">
  <path d="M664 503.5L681.5 503.5L673.6 521z"/>
  <path d="M116.7 848.4L131 836.5L135 852z"/>
 </g>
</svg>
<!-- WATERMARK -->
<div class="t" style="left:797px;top:899px;font-size:27px;color:#111;text-shadow:1px 1px 0 #fff,-1px -1px 0 #fff,1px -1px 0 #fff,-1px 1px 0 #fff,2px 2px 2px rgba(0,0,0,0.55)">头条 <span style="letter-spacing:2px">@Excel</span>从零到一</div>
</body></html>
